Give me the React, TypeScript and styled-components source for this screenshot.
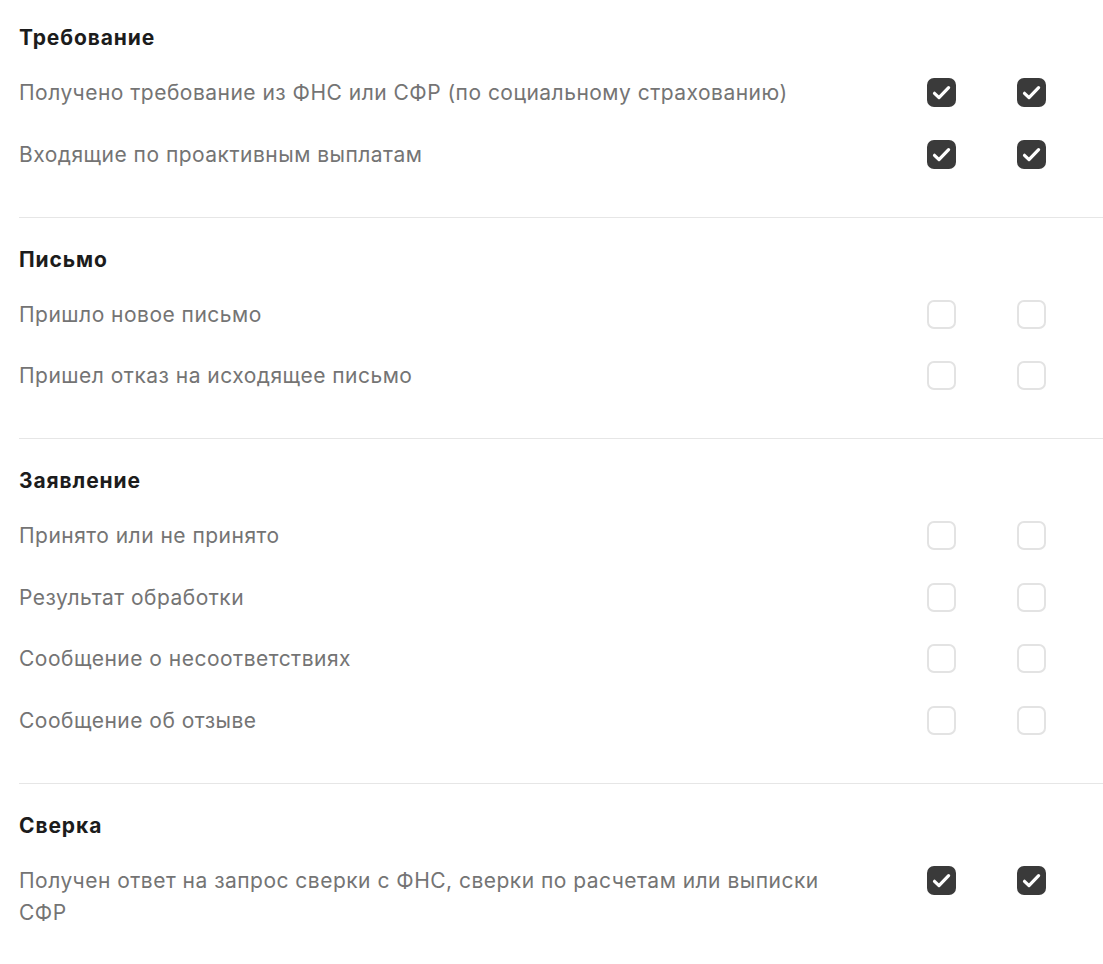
import styled, { createGlobalStyle } from 'styled-components';

interface Item {
  label: string;
  email: boolean;
  push: boolean;
}

interface Group {
  title: string;
  items: Item[];
}

const groups: Group[] = [
  {
    title: 'Требование',
    items: [
      { label: 'Получено требование из ФНС или СФР (по социальному страхованию)', email: true, push: true },
      { label: 'Входящие по проактивным выплатам', email: true, push: true },
    ],
  },
  {
    title: 'Письмо',
    items: [
      { label: 'Пришло новое письмо', email: false, push: false },
      { label: 'Пришел отказ на исходящее письмо', email: false, push: false },
    ],
  },
  {
    title: 'Заявление',
    items: [
      { label: 'Принято или не принято', email: false, push: false },
      { label: 'Результат обработки', email: false, push: false },
      { label: 'Сообщение о несоответствиях', email: false, push: false },
      { label: 'Сообщение об отзыве', email: false, push: false },
    ],
  },
  {
    title: 'Сверка',
    items: [
      { label: 'Получен ответ на запрос сверки с ФНС, сверки по расчетам или выписки СФР', email: true, push: true },
    ],
  },
];

// чекбокс настройки уведомления
const Check = ({ checked }: { checked: boolean }) => (
  <Box checked={checked}>
    {checked && (
      <svg width="29" height="29" viewBox="0 0 29 29">
        <path d="M7.5 15.3 L12 19.6 L21.6 9.6" fill="none" stroke="#fff" strokeWidth="3.2" strokeLinecap="round" strokeLinejoin="round" />
      </svg>
    )}
  </Box>
);

const App = () => {
  return (
    <>
      <GlobalStyle />
      <Page>
        {groups.map((group) => (
          <Section key={group.title}>
            <Title>{group.title}</Title>
            <Rows>
              {group.items.map((item) => (
                <Row key={item.label}>
                  <Label>{item.label}</Label>
                  <Checks>
                    <Check checked={item.email} />
                    <Check checked={item.push} />
                  </Checks>
                </Row>
              ))}
            </Rows>
          </Section>
        ))}
      </Page>
    </>
  );
};

export default App;

const GlobalStyle = createGlobalStyle`
  body {
    margin: 0;
    background: #fff;
    font-family: Inter, "Noto Sans", sans-serif;
  }
`;

const Page = styled.div`
  padding-left: 19px;
`;

const Section = styled.section`
  padding: 30px 0 46px;
  border-bottom: 1px solid #e6e6e6;

  &:first-child {
    padding-top: 26px;
  }

  &:last-child {
    border-bottom: none;
    padding-bottom: 36px;
  }
`;

const Title = styled.div`
  font-size: 21px;
  font-weight: 700;
  line-height: 24px;
  letter-spacing: 0.9px;
  color: #1c1c1c;
`;

const Rows = styled.div`
  display: flex;
  flex-direction: column;
  gap: 29.5px;
  margin-top: 27px;
`;

const Row = styled.div`
  display: flex;
  align-items: flex-start;
`;

const Label = styled.div`
  flex: 1;
  max-width: 840px;
  padding-right: 58px;
  font-size: 21px;
  line-height: 32px;
  letter-spacing: 0.48px;
  color: #747474;
`;

const Checks = styled.div`
  display: flex;
  gap: 61px;
  margin-left: auto;
  margin-right: 57px;
  padding-top: 1px;
`;

const Box = styled.div<{ checked: boolean }>`
  box-sizing: border-box;
  width: 29px;
  height: 29px;
  border-radius: 7px;
  background: ${(p) => (p.checked ? '#3a3a3a' : '#fff')};
  border: ${(p) => (p.checked ? 'none' : '2px solid #e3e3e3')};
  display: flex;
  align-items: center;
  justify-content: center;
`;
